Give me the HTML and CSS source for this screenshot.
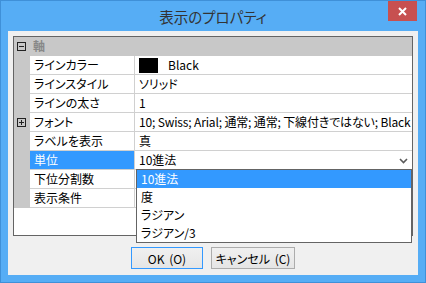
FILE: index.html
```html
<!DOCTYPE html>
<html lang="ja">
<head>
  <meta charset="UTF-8">
  <title>表示のプロパティ</title>
  <link rel="stylesheet" href="styles.css">
</head>
<body>
  <div class="window">
    <div class="titlebar">
      <div class="title">表示のプロパティ</div>
      <div class="close">
        <svg width="9" height="9" viewBox="0 0 9 9"><path d="M1 1 L8 8 M8 1 L1 8" stroke="#fff" stroke-width="2"/></svg>
      </div>
    </div>

    <div class="client">
      <div class="grid">
        <div class="row cat">
          <div class="gutter"><span class="toggle minus"></span></div>
          <div class="cat-label">軸</div>
        </div>
        <div class="row">
          <div class="gutter"></div>
          <div class="name">ラインカラー</div>
          <div class="value"><span class="swatch"></span>Black</div>
        </div>
        <div class="row">
          <div class="gutter"></div>
          <div class="name">ラインスタイル</div>
          <div class="value">ソリッド</div>
        </div>
        <div class="row">
          <div class="gutter"></div>
          <div class="name">ラインの太さ</div>
          <div class="value">1</div>
        </div>
        <div class="row">
          <div class="gutter"><span class="toggle plus"></span></div>
          <div class="name">フォント</div>
          <div class="value tight">10; Swiss; Arial; 通常; 通常; 下線付きではない; Black</div>
        </div>
        <div class="row">
          <div class="gutter"></div>
          <div class="name">ラベルを表示</div>
          <div class="value">真</div>
        </div>
        <div class="row">
          <div class="gutter"></div>
          <div class="name selected">単位</div>
          <div class="value combo">
            <span>10進法</span>
            <svg class="chevron" width="9" height="6" viewBox="0 0 9 6"><path d="M1 1 L4.5 4.5 L8 1" fill="none" stroke="#5a5a5a" stroke-width="1.6"/></svg>
          </div>
        </div>
        <div class="row">
          <div class="gutter"></div>
          <div class="name">下位分割数</div>
          <div class="value"></div>
        </div>
        <div class="row">
          <div class="gutter"></div>
          <div class="name">表示条件</div>
          <div class="value"></div>
        </div>
      </div>

      <div class="buttons">
        <button class="btn default">OK (O)</button>
        <button class="btn cancel">キャンセル (C)</button>
      </div>

      <!-- open combo list -->
      <div class="dropdown">
        <div class="item active">10進法</div>
        <div class="item">度</div>
        <div class="item">ラジアン</div>
        <div class="item">ラジアン/3</div>
      </div>
    </div>
  </div>
</body>
</html>
```

FILE: styles.css
```css
* {
  box-sizing: border-box;
}
body {
  margin: 0;
  font-family: "Noto Sans CJK JP", sans-serif;
  font-size: 12px;
  font-feature-settings: "palt";
  color: #000;
}
.window {
  width: 426px;
  height: 283px;
  border: 1px solid #3f90d8;
  background: #56adf5;
  padding: 0 7px 7px 7px;
  display: flex;
  flex-direction: column;
}
.titlebar {
  height: 30px;
  display: grid;
  grid-template-columns: 1fr auto 1fr;
}
.title {
  grid-column: 2;
  font-size: 14.5px;
  line-height: 31px;
  color: #333;
}
.close {
  grid-column: 3;
  justify-self: end;
  width: 29px;
  height: 20px;
  margin-right: 1px;
  background: #c75050;
  display: flex;
  align-items: center;
  justify-content: center;
}
.client {
  position: relative;
  flex: 1;
  background: #f0f0f0;
  padding: 5px;
}
.grid {
  height: 200px;
  border: 1px solid #646464;
  background: #fff;
}
.row {
  display: flex;
  height: 19px;
  line-height: 18px;
}
.row.cat {
  background: #c8c8c8;
}
.gutter {
  width: 16px;
  background: #c8c8c8;
  position: relative;
}
.cat-label {
  padding-left: 3px;
  font-weight: bold;
  color: #888;
}
.name {
  width: 105px;
  padding-left: 4px;
  border-right: 1px solid #d0d0d0;
  border-bottom: 1px solid #d0d0d0;
  white-space: nowrap;
}
.name.selected {
  background: #3399ff;
  color: #fff;
}
.value {
  flex: 1;
  padding-left: 4px;
  border-bottom: 1px solid #d0d0d0;
  white-space: nowrap;
  overflow: hidden;
  display: flex;
  align-items: center;
}
.value.tight {
  letter-spacing: -0.15px;
}
.swatch {
  width: 19px;
  height: 15px;
  background: #000;
  margin-right: 10px;
}
.combo {
  justify-content: space-between;
  padding-right: 4px;
}
.chevron {
  margin-top: 1px;
}
.toggle {
  position: absolute;
  left: 3px;
  top: 5px;
  width: 9px;
  height: 9px;
  border: 1px solid #222;
}
.toggle::before {
  content: "";
  position: absolute;
  left: 1px;
  top: 3px;
  width: 5px;
  height: 1px;
  background: #222;
}
.toggle.plus::after {
  content: "";
  position: absolute;
  left: 3px;
  top: 1px;
  width: 1px;
  height: 5px;
  background: #222;
}
.buttons {
  margin-top: 11px;
  display: flex;
  justify-content: center;
  gap: 8px;
}
.btn {
  height: 22px;
  font-family: inherit;
  font-size: 12px;
  font-feature-settings: "palt";
  color: #000;
  background: linear-gradient(#f0f0f0, #e5e5e5);
  border: 1px solid #acacac;
  padding: 0;
  word-spacing: 2px;
}
.btn.default {
  width: 72px;
  border-color: #3399ff;
}
.btn.cancel {
  width: 84px;
}
.dropdown {
  position: absolute;
  left: 128px;
  top: 138px;
  width: 276px;
  height: 74px;
  border: 1px solid #646464;
  background: #fff;
}
.item {
  height: 18px;
  line-height: 18px;
  padding-left: 4px;
}
.item.active {
  background: #3399ff;
  color: #fff;
}
```
